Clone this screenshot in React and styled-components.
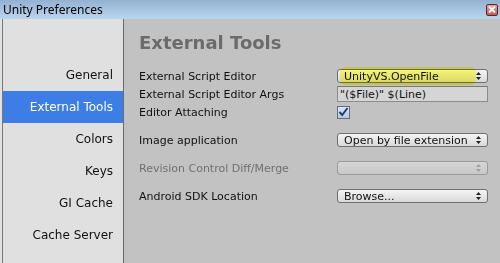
import React from "react";
import styled, { createGlobalStyle } from "styled-components";

const Global = createGlobalStyle`
  html, body {
    margin: 0;
    padding: 0;
    width: 500px;
    height: 263px;
    overflow: hidden;
    background: #c2c2c2;
  }
  * { box-sizing: border-box; }
`;

const Window = styled.div`
  width: 500px;
  height: 263px;
  display: flex;
  flex-direction: column;
  font-family: "DejaVu Sans", Verdana, sans-serif;
`;

const TitleBar = styled.div`
  height: 19px;
  flex: none;
  display: flex;
  align-items: center;
  justify-content: space-between;
  padding: 0 2px 0 3px;
  background: linear-gradient(#93b1d2, #bcd5ee);
  font-family: "Noto Sans", "Open Sans", sans-serif;
  font-size: 12px;
  color: #000;
`;

const CloseBtn = styled.div`
  width: 12px;
  height: 12px;
  border: 1px solid #5a2a2a;
  border-radius: 2px;
  background: linear-gradient(#e7a19a, #c25a52);
  display: flex;
  align-items: center;
  justify-content: center;
`;

const Body = styled.div`
  flex: 1;
  display: flex;
  border-left: 2px solid #e2e2e2;
`;

const Sidebar = styled.div`
  width: 122px;
  flex: none;
  background: #e0e0e0;
  border-left: 1px solid #777;
  border-right: 1px solid #6b6b6b;
  padding-top: 40px;
  display: flex;
  flex-direction: column;
`;

const NavItem = styled.div`
  height: 32px;
  display: flex;
  align-items: center;
  justify-content: flex-end;
  padding-right: 10px;
  font-size: 12px;
  color: ${p => (p.$active ? "#fff" : "#111")};
  background: ${p => (p.$active ? "#3d7ee6" : "transparent")};
`;

const Content = styled.div`
  flex: 1;
  background: #c2c2c2;
  padding: 12px 12px 0 15px;
`;

const Heading = styled.div`
  font-size: 18px;
  font-weight: bold;
  color: #6b6b6b;
  height: 36px;
  line-height: 24px;
`;

const Group = styled.div`
  margin-bottom: 10px;
`;

const Row = styled.div`
  height: 18px;
  display: flex;
  align-items: center;
`;

const Label = styled.div`
  width: 198px;
  flex: none;
  font-size: 11px;
  color: ${p => (p.$disabled ? "#707070" : "#111")};
`;

const Control = styled.div`
  width: 151px;
  position: relative;
  display: flex;
  align-items: center;
`;

const Popup = styled.div`
  width: 151px;
  height: 14px;
  border: 1px solid ${p => (p.$disabled ? "#9a9a9a" : "#6f6f6f")};
  border-radius: 3px;
  background: ${p =>
    p.$disabled
      ? "linear-gradient(#d6d6d6, #c8c8c8)"
      : "linear-gradient(#f4f4f4, #d9d9d9)"};
  display: flex;
  align-items: center;
  justify-content: space-between;
  padding: 0 6px 0 6px;
  font-size: 11px;
  color: #111;
`;

const TextField = styled.div`
  width: 151px;
  height: 16px;
  border: 1px solid #8c8c8c;
  border-top-color: #7a7a7a;
  background: #d5d5d5;
  font-size: 11px;
  color: #111;
  padding: 1px 2px;
  line-height: 13px;
`;

const Checkbox = styled.div`
  width: 13px;
  height: 13px;
  border: 1px solid #5f6f85;
  background: linear-gradient(#dce6f2, #b8c8dc);
  display: flex;
  align-items: center;
  justify-content: center;
`;

const Highlight = styled.div`
  position: absolute;
  left: 3px;
  top: -2px;
  width: 136px;
  height: 18px;
  border-radius: 5px;
  background: rgba(255, 255, 40, 0.62);
  mix-blend-mode: multiply;
  pointer-events: none;
`;

const Arrows = ({ dim }) => (
  <svg width="5" height="8" viewBox="0 0 5 8">
    <path d="M2.5 0 L5 3 L0 3 Z M2.5 8 L5 5 L0 5 Z" fill={dim ? "#a0a0a0" : "#222"} />
  </svg>
);

const nav = ["General", "External Tools", "Colors", "Keys", "GI Cache", "Cache Server"];

export default function App() {
  return (
    <Window>
      <Global />
      <TitleBar>
        <span>Unity Preferences</span>
        <CloseBtn>
          <svg width="8" height="7" viewBox="0 0 8 7">
            <path d="M1 0.5 L7 6.5 M7 0.5 L1 6.5" stroke="#fff" strokeWidth="2" />
          </svg>
        </CloseBtn>
      </TitleBar>
      <Body>
        <Sidebar>
          {nav.map(n => (
            <NavItem key={n} $active={n === "External Tools"}>{n}</NavItem>
          ))}
        </Sidebar>
        <Content>
          <Heading>External Tools</Heading>
          <Group>
            <Row>
              <Label>External Script Editor</Label>
              <Control>
                <Popup>
                  <span>UnityVS.OpenFile</span>
                  <Arrows />
                </Popup>
                <Highlight />
              </Control>
            </Row>
            <Row>
              <Label>External Script Editor Args</Label>
              <Control>
                <TextField>"($File)" $(Line)</TextField>
              </Control>
            </Row>
            <Row>
              <Label>Editor Attaching</Label>
              <Control>
                <Checkbox>
                  <svg width="11" height="10" viewBox="0 0 11 10">
                    <path d="M1.5 5 L4.2 8 L9.5 1" stroke="#1d3f74" strokeWidth="2" fill="none" />
                  </svg>
                </Checkbox>
              </Control>
            </Row>
          </Group>
          <Group>
            <Row>
              <Label>Image application</Label>
              <Control>
                <Popup>
                  <span>Open by file extension</span>
                  <Arrows />
                </Popup>
              </Control>
            </Row>
          </Group>
          <Group>
            <Row>
              <Label $disabled>Revision Control Diff/Merge</Label>
              <Control>
                <Popup $disabled>
                  <span />
                  <Arrows dim />
                </Popup>
              </Control>
            </Row>
          </Group>
          <Group>
            <Row>
              <Label>Android SDK Location</Label>
              <Control>
                <Popup>
                  <span>Browse...</span>
                  <Arrows />
                </Popup>
              </Control>
            </Row>
          </Group>
        </Content>
      </Body>
    </Window>
  );
}
